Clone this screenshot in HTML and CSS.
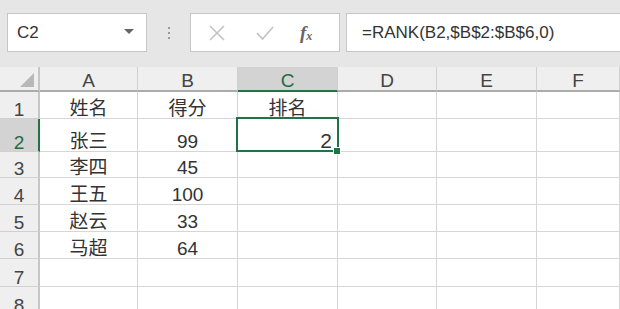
FILE: index.html
```html
<!DOCTYPE html>
<html lang="zh-CN">
<head>
  <meta charset="UTF-8">
  <title>RANK</title>
  <link rel="stylesheet" href="styles.css">
</head>
<body>
  <div class="formula-bar">
    <div class="name-box">
      <span>C2</span>
      <span class="caret"></span>
    </div>
    <div class="grip"><i></i><i></i><i></i></div>
    <div class="fx-buttons">
      <svg width="18" height="18" viewBox="0 0 18 18"><path d="M2 2 L16 16 M16 2 L2 16" stroke="#c3c3c3" stroke-width="1.6" fill="none"/></svg>
      <svg width="20" height="18" viewBox="0 0 20 18"><path d="M2 9 L7.5 15 L18 3" stroke="#c3c3c3" stroke-width="1.8" fill="none"/></svg>
      <span class="fx">f<sub>x</sub></span>
    </div>
    <div class="formula">=RANK(B2,$B$2:$B$6,0)</div>
  </div>

  <div class="sheet">
    <div class="hd corner"><span class="tri"></span></div>
    <div class="hd">A</div>
    <div class="hd">B</div>
    <div class="hd sel-col">C</div>
    <div class="hd">D</div>
    <div class="hd">E</div>
    <div class="hd">F</div>

    <div class="rh">1</div>
    <div class="c">姓名</div><div class="c">得分</div><div class="c">排名</div><div class="c"></div><div class="c"></div><div class="c"></div>

    <div class="rh sel-row">2</div>
    <div class="c">张三</div><div class="c">99</div>
    <div class="c num active">2<span class="handle"></span></div>
    <div class="c"></div><div class="c"></div><div class="c"></div>

    <div class="rh">3</div>
    <div class="c">李四</div><div class="c">45</div><div class="c"></div><div class="c"></div><div class="c"></div><div class="c"></div>

    <div class="rh">4</div>
    <div class="c">王五</div><div class="c">100</div><div class="c"></div><div class="c"></div><div class="c"></div><div class="c"></div>

    <div class="rh">5</div>
    <div class="c">赵云</div><div class="c">33</div><div class="c"></div><div class="c"></div><div class="c"></div><div class="c"></div>

    <div class="rh">6</div>
    <div class="c">马超</div><div class="c">64</div><div class="c"></div><div class="c"></div><div class="c"></div><div class="c"></div>

    <div class="rh">7</div>
    <div class="c"></div><div class="c"></div><div class="c"></div><div class="c"></div><div class="c"></div><div class="c"></div>

    <div class="rh">8</div>
    <div class="c"></div><div class="c"></div><div class="c"></div><div class="c"></div><div class="c"></div><div class="c"></div>
  </div>
</body>
</html>
```

FILE: styles.css
```css
body {
  margin: 0;
  background: #e6e6e6;
  font-family: "Liberation Sans", "Noto Sans CJK SC", sans-serif;
  color: #333;
  overflow: hidden;
  height: 309px;
}

/* barre de formule */
.formula-bar {
  height: 67px;
  box-sizing: border-box;
  padding: 13px 0 0 7px;
  display: flex;
  align-items: flex-start;
}
.name-box {
  width: 140px;
  height: 39px;
  box-sizing: border-box;
  background: #fff;
  border: 1px solid #c6c6c6;
  display: flex;
  align-items: center;
  justify-content: space-between;
  padding: 0 12px 0 9px;
  font-size: 17px;
  color: #333;
}
.caret {
  width: 0;
  height: 0;
  border-left: 5px solid transparent;
  border-right: 5px solid transparent;
  border-top: 5px solid #666;
  margin-bottom: 3px;
}
.grip {
  width: 43px;
  height: 39px;
  display: flex;
  flex-direction: column;
  align-items: center;
  justify-content: center;
  gap: 3px;
}
.grip i {
  width: 2px;
  height: 2px;
  background: #9a9a9a;
}
.fx-buttons {
  width: 150px;
  height: 39px;
  box-sizing: border-box;
  background: #fff;
  border: 1px solid #c6c6c6;
  display: flex;
  align-items: center;
  padding: 0 0 0 17px;
  gap: 29px;
}
.fx {
  font-family: "Liberation Serif", serif;
  font-style: italic;
  font-weight: bold;
  font-size: 19px;
  color: #666;
  margin-left: -4px;
}
.fx sub {
  font-size: 12px;
  vertical-align: -1px;
}
.formula {
  flex: 1;
  margin-left: 6px;
  margin-right: -4px;
  height: 39px;
  box-sizing: border-box;
  background: #fff;
  border: 1px solid #c6c6c6;
  padding: 0 0 0 15px;
  line-height: 37px;
  font-size: 17px;
  color: #333;
}

/* feuille */
.sheet {
  display: grid;
  grid-template-columns: 40px 98px 100px 100px 99px 100px 1fr;
  grid-template-rows: 25px 27px 33px 26px 27px 27px 27px 28px 28px;
  background: #fff;
  font-size: 19px;
  line-height: 18px;
}
.hd, .rh {
  background: #efefef;
  color: #444;
  display: flex;
  justify-content: center;
  box-sizing: border-box;
  border-right: 1px solid #d0d0d0;
  border-bottom: 1px solid #d0d0d0;
  font-size: 19px;
}
.hd {
  align-items: center;
  padding-top: 5px;
  border-bottom: 2px solid #ababab;
}
.rh {
  align-items: flex-end;
  line-height: 17px;
  border-right: 2px solid #c6c6c6;
}
.corner {
  position: relative;
  border-right: 2px solid #c6c6c6;
}
.tri {
  position: absolute;
  right: 4px;
  bottom: 3px;
  width: 0;
  height: 0;
  border-left: 14px solid transparent;
  border-bottom: 14px solid #b8b8b8;
}
.sel-col {
  background: #d3d3d3;
  color: #1f6b41;
  border-bottom: 2px solid #217346;
}
.sel-row {
  background: #d3d3d3;
  color: #1f6b41;
  border-right: 2px solid #217346;
}
.c {
  box-sizing: border-box;
  border-right: 1px solid #d6d6d6;
  border-bottom: 1px solid #d6d6d6;
  display: flex;
  align-items: flex-end;
  justify-content: center;
  color: #333;
}
.c.num {
  justify-content: flex-end;
  padding-right: 5px;
  font-size: 21px;
  line-height: 21px;
}
.active {
  position: relative;
}
.active::before {
  content: "";
  position: absolute;
  left: -2px;
  top: -2px;
  right: -2px;
  bottom: -1px;
  border: 2px solid #217346;
}
.handle {
  position: absolute;
  right: -4px;
  bottom: -4px;
  width: 6px;
  height: 6px;
  background: #217346;
  border: 1px solid #fff;
}
```
